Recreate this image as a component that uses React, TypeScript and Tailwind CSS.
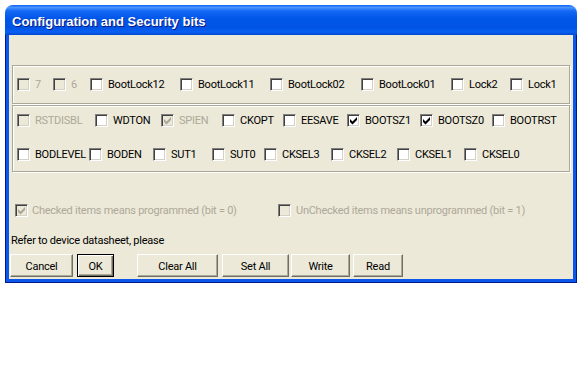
type BitState = "off" | "on" | "dis" | "dison";
type Bit = [string, string, BitState];

// [label, width class (checkbox left edge to next checkbox), state]
const LOCK_BITS: Bit[] = [
  ["7", "w-[36px]", "dis"],
  ["6", "w-[37px]", "dis"],
  ["BootLock12", "w-[90px]", "off"],
  ["BootLock11", "w-[90px]", "off"],
  ["BootLock02", "w-[91px]", "off"],
  ["BootLock01", "w-[90px]", "off"],
  ["Lock2", "w-[59px]", "off"],
  ["Lock1", "", "off"],
];

const HIGH_FUSES: Bit[] = [
  ["RSTDISBL", "w-[78px]", "dis"],
  ["WDTON", "w-[66px]", "off"],
  ["SPIEN", "w-[61px]", "dison"],
  ["CKOPT", "w-[61px]", "off"],
  ["EESAVE", "w-[64px]", "off"],
  ["BOOTSZ1", "w-[73px]", "on"],
  ["BOOTSZ0", "w-[72px]", "on"],
  ["BOOTRST", "", "off"],
];

const LOW_FUSES: Bit[] = [
  ["BODLEVEL", "w-[72px]", "off"],
  ["BODEN", "w-[64px]", "off"],
  ["SUT1", "w-[59px]", "off"],
  ["SUT0", "w-[52px]", "off"],
  ["CKSEL3", "w-[67px]", "off"],
  ["CKSEL2", "w-[66px]", "off"],
  ["CKSEL1", "w-[67px]", "off"],
  ["CKSEL0", "", "off"],
];

function CheckBox({ state }: { state: BitState }) {
  const disabled = state === "dis" || state === "dison";
  const checked = state === "on" || state === "dison";
  return (
    <span
      className={`relative block w-[13px] h-[13px] shrink-0 border border-t-[#808080] border-l-[#808080] border-b-white border-r-white shadow-[inset_1px_1px_0_#404040,inset_-1px_-1px_0_#d4d0c8] ${
        disabled ? "bg-[#ece9d8]" : "bg-white"
      }`}
    >
      {checked && (
        <svg viewBox="0 0 11 11" className="absolute left-0 top-0 w-[11px] h-[11px]">
          <polygon points="2,4 4.5,6.5 9,2 9,5 4.5,9.5 2,7" fill={disabled ? "#aca899" : "#000"} />
        </svg>
      )}
    </span>
  );
}

function BitRow({ bits }: { bits: Bit[] }) {
  return (
    <div className="flex items-center h-[13px]">
      {bits.map(([label, w, state]) => {
        const disabled = state === "dis" || state === "dison";
        return (
          <div key={label} className={`flex items-center gap-[5px] shrink-0 ${w}`}>
            <CheckBox state={state} />
            <span className={`leading-[13px] whitespace-nowrap ${disabled ? "text-[#aca899]" : "text-black"}`}>
              {label}
            </span>
          </div>
        );
      })}
    </div>
  );
}

function Button({ label, cls, isDefault }: { label: string; cls: string; isDefault?: boolean }) {
  return (
    <button
      className={`h-[23px] shrink-0 bg-[#ece9d8] text-black leading-none pt-[1px] ${cls} ${
        isDefault
          ? "border border-black shadow-[inset_1px_1px_0_#fff,inset_-1px_-1px_0_#716f64,inset_-2px_-2px_0_#aca899]"
          : "border border-t-white border-l-white border-r-[#716f64] border-b-[#716f64] shadow-[inset_-1px_-1px_0_#aca899]"
      }`}
    >
      {label}
    </button>
  );
}

export default function App() {
  return (
    <div className="w-[582px] h-[384px] bg-white pl-[5px] pt-[5px] font-['Roboto',sans-serif] text-[11px] tracking-[-0.25px]">
      <div className="w-[572px] h-[278px] flex flex-col rounded-t-[8px] overflow-hidden">
        {/* Title bar */}
        <div className="h-[30px] shrink-0 flex items-center pl-[7px] pt-[3px] bg-[linear-gradient(180deg,#0a5ff0_0%,#4a94ff_8%,#1468f5_20%,#0056e8_45%,#0053e5_75%,#0960f2_90%,#0046d0_100%)]">
          <span className="font-['Liberation_Sans',Arial,sans-serif] font-bold text-[13px] tracking-normal text-white [text-shadow:1px_1px_0_#0a1883]">
            Configuration and Security bits
          </span>
        </div>

        {/* Frame + client */}
        <div className="flex-1 flex border-x border-b border-[#001a8c] bg-[#0c56ea] px-[3px] pb-[3px]">
          <div className="flex-1 flex flex-col bg-[#ece9d8]">
            {/* Lock bits */}
            <div className="mt-[30px] mx-[3px] h-[39px] flex items-center pl-[4px] border border-[#aca899] shadow-[inset_1px_1px_0_#fff,1px_1px_0_#fff]">
              <BitRow bits={LOCK_BITS} />
            </div>

            {/* Fuse bits */}
            <div className="mt-[1px] mx-[3px] h-[67px] flex flex-col pt-[8px] gap-[21px] pl-[4px] border border-[#aca899] shadow-[inset_1px_1px_0_#fff,1px_1px_0_#fff]">
              <BitRow bits={HIGH_FUSES} />
              <BitRow bits={LOW_FUSES} />
            </div>

            {/* Legend */}
            <div className="mt-[32px] pl-[6px] flex items-center h-[13px] text-[#aca899]">
              <div className="flex items-center gap-[4px] w-[263px] shrink-0">
                <CheckBox state="dison" />
                <span className="leading-[13px]">Checked items means programmed (bit = 0)</span>
              </div>
              <div className="flex items-center gap-[5px]">
                <CheckBox state="dis" />
                <span className="leading-[13px]">UnChecked items means unprogrammed (bit = 1)</span>
              </div>
            </div>

            <div className="mt-[17px] pl-[2px] leading-[13px] text-black">Refer to device datasheet, please</div>

            {/* Buttons */}
            <div className="mt-[7px] flex">
              <Button label="Cancel" cls="ml-[1px] w-[63px]" />
              <Button label="OK" cls="ml-[4px] w-[37px]" isDefault />
              <Button label="Clear All" cls="ml-[23px] w-[81px]" />
              <Button label="Set All" cls="ml-[4px] w-[67px]" />
              <Button label="Write" cls="ml-[2px] w-[59px]" />
              <Button label="Read" cls="ml-[3px] w-[50px]" />
            </div>
          </div>
        </div>
      </div>
    </div>
  );
}
